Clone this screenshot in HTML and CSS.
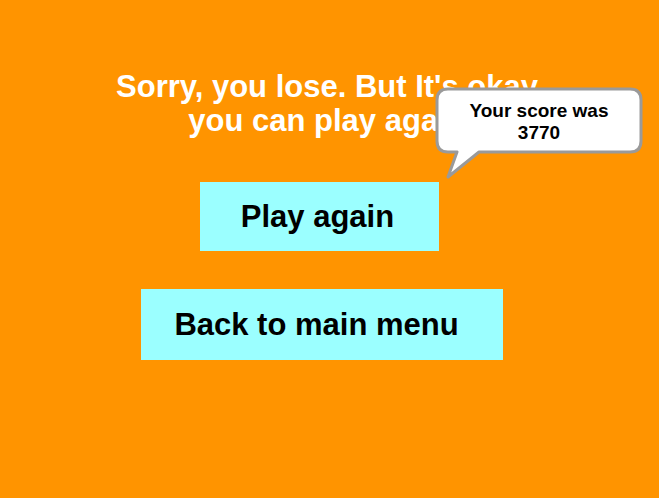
FILE: index.html
```html
<!DOCTYPE html>
<html>
<head>
<meta charset="utf-8">
<link rel="stylesheet" href="styles.css">
</head>
<body>
<main class="screen">
  <h1 class="title">Sorry, you lose. But It's okay<br>you can play again</h1>
  <div class="buttons">
    <button class="btn btn-play">Play again</button>
    <button class="btn btn-back">Back to main menu</button>
  </div>
  <div class="bubble">
    <svg class="bubble-shape" width="210" height="95" viewBox="0 0 210 95">
      <path d="M13 2 H195 Q206 2 206 13 V54 Q206 65 195 65 H44 L13 90 L22 65 H13 Q2 65 2 54 V13 Q2 2 13 2 Z" fill="#ffffff" stroke="#9a9a9a" stroke-width="3" stroke-linejoin="round"/>
    </svg>
    <div class="bubble-text">Your score was<br>3770</div>
  </div>
</main>
</body>
</html>
```

FILE: styles.css
```css
html {
  background: #ffffff;
}
body {
  margin: 0;
  background: #ff9400;
  height: 498px;
  overflow: hidden;
  font-family: "Liberation Sans", Arial, sans-serif;
}
.screen {
  position: relative;
  display: flex;
  flex-direction: column;
  align-items: center;
  padding: 70px 20px 0 0;
  height: 100%;
  box-sizing: border-box;
}
.title {
  margin: 0;
  padding-left: 15px;
  color: #ffffff;
  font-size: 31px;
  line-height: 34px;
  font-weight: bold;
  text-align: center;
}
.buttons {
  margin-top: 44px;
  display: flex;
  flex-direction: column;
  align-items: center;
  gap: 38px;
}
.btn {
  background: #9bffff;
  border: none;
  font-family: "Liberation Sans", Arial, sans-serif;
  font-weight: bold;
  font-size: 31px;
  color: #000000;
  padding: 0;
}
.btn-play {
  width: 239px;
  height: 69px;
  padding-right: 4px;
}
.btn-back {
  width: 362px;
  height: 71px;
  margin-left: 5px;
  padding-right: 11px;
}
.bubble {
  position: absolute;
  left: 435px;
  top: 87px;
  width: 210px;
  height: 95px;
}
.bubble-shape {
  position: absolute;
  left: 0;
  top: 0;
}
.bubble-text {
  position: relative;
  width: 208px;
  padding-top: 13px;
  text-align: center;
  font-size: 19px;
  line-height: 22px;
  font-weight: bold;
  color: #000000;
}
```
